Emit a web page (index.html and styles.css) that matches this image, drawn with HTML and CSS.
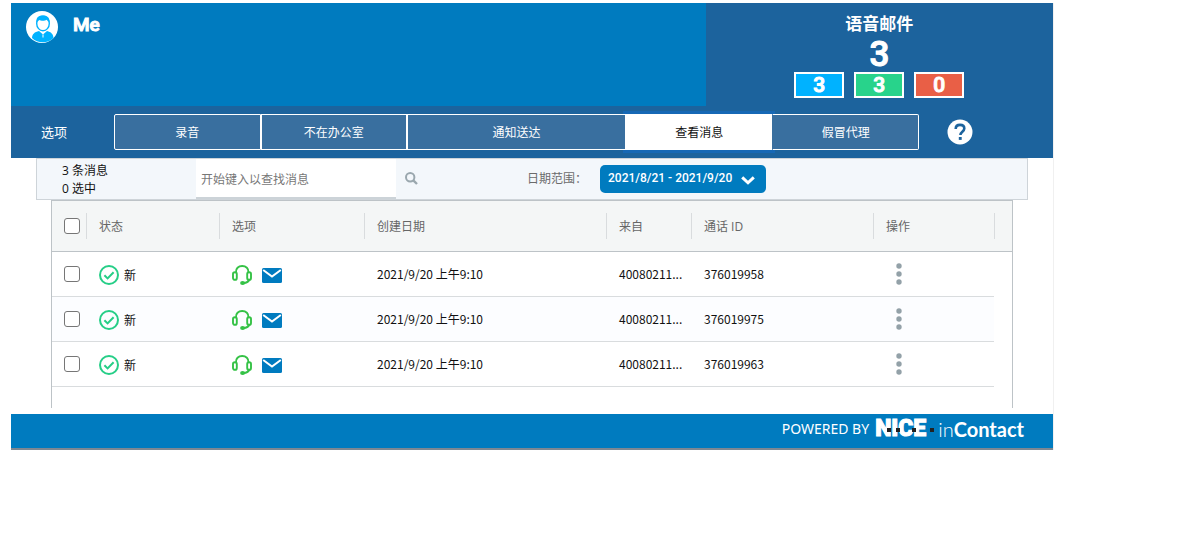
FILE: index.html
```html
<!DOCTYPE html>
<html lang="zh-CN">
<head>
<meta charset="utf-8">
<title>语音邮件</title>
<link rel="stylesheet" href="styles.css">
</head>
<body>
<svg class="defs" aria-hidden="true">
  <symbol id="check" viewBox="0 0 20 20"><circle cx="10" cy="10" r="9" fill="none" stroke="#26ce87" stroke-width="2"/><path d="M5.4 10.2l3.2 3.2 6-6.2" fill="none" stroke="#26ce87" stroke-width="2"/></symbol>
  <symbol id="headset" viewBox="0 0 20 20"><g fill="none" stroke="#35c246" stroke-width="1.900"><path d="M4 7.500C3.500 3.500 6.500 1 10.200 1s6.700 2.500 6.200 6.500"/><rect x="1" y="7.200" width="3.800" height="7.600" rx="1.900"/><rect x="15.200" y="7.200" width="3.800" height="7.600" rx="1.900"/><path d="M17.500 14c-.5 2.600-2.500 3.800-6.500 4.200"/></g><ellipse cx="10.600" cy="18" rx="2.500" ry="1.900" fill="#35c246"/></symbol>
  <symbol id="mail" viewBox="0 0 20 15"><rect width="20" height="15" rx="1.500" fill="#007bbf"/><path d="M1.200 2l8.800 6.600L18.800 2" fill="none" stroke="#fff" stroke-width="2"/></symbol>
  <symbol id="dots" viewBox="0 0 6 22"><g fill="#93a1a8"><circle cx="3" cy="3" r="2.700"/><circle cx="3" cy="11" r="2.700"/><circle cx="3" cy="19" r="2.700"/></g></symbol>
</svg>
<div class="app">
  <header class="header">
    <div class="profile">
      <svg class="avatar" viewBox="0 0 32 32" aria-hidden="true"><circle cx="16" cy="16" r="16" fill="#fff"/><path d="M6 27c.3-4 2.500-6 7-7l4 3.500 4-3.500c4.200 1 6.200 3 6.500 7a15.500 15.500 0 0 1-21.500 0z" fill="#00b2ff"/><path d="M17 23.500v3" stroke="#fff"/><ellipse cx="17" cy="12.500" rx="6.300" ry="7.300" fill="#fff" stroke="#00b2ff" stroke-width="1.400"/><path d="M10.600 11C9.800 6 13 4.500 17 4.500c3.500 0 7 1.500 6.400 6.500-1-.4-2-1.200-2.700-2.300-2.500 1.800-6 1-7.500.3-.6.8-1.200 1.500-2.200 2z" fill="#00b2ff"/></svg>
      <span class="name">Me</span>
    </div>
    <div class="voicemail">
      <div class="vm-title">语音邮件</div>
      <div class="vm-total">3</div>
      <div class="vm-counts">
        <span class="count new">3</span><span class="count read">3</span><span class="count urgent">0</span>
      </div>
    </div>
  </header>
  <nav class="nav">
    <span class="nav-label">选项</span>
    <div class="tabs">
      <button class="tab">录音</button>
      <button class="tab">不在办公室</button>
      <button class="tab wide">通知送达</button>
      <button class="tab active">查看消息</button>
      <button class="tab">假冒代理</button>
    </div>
    <button class="help" aria-label="帮助"><svg viewBox="0 0 26 26" aria-hidden="true"><circle cx="13" cy="13" r="12.500" fill="#fff"/><path d="M8.700 9.900c0-2.500 1.800-4 4.300-4s4.300 1.400 4.300 3.600c0 3-3.900 3.300-3.900 6.400" fill="none" stroke="#1c639d" stroke-width="2.600"/><rect x="11.800" y="18" width="2.900" height="2.900" fill="#1c639d"/></svg></button>
  </nav>
  <main class="content">
    <section class="toolbar">
      <div class="summary"><div>3 条消息</div><div>0 选中</div></div>
      <input class="search" type="text" aria-label="查找消息" placeholder="开始键入以查找消息">
      <svg class="search-icon" viewBox="0 0 13 13" aria-hidden="true"><circle cx="5.200" cy="5.200" r="4.200" fill="none" stroke="#9aa7ae" stroke-width="2"/><path d="M8.300 8.300l3.700 3.700" stroke="#9aa7ae" stroke-width="2.400"/></svg>
      <span class="range-label">日期范围：</span>
      <button class="range">2021/8/21 - 2021/9/20<svg viewBox="0 0 14 9" aria-hidden="true"><path d="M1.200 1.400L7 6.800l5.800-5.400" fill="none" stroke="#fff" stroke-width="3"/></svg></button>
    </section>
    <section class="grid">
      <table>
        <colgroup><col class="c-check"><col class="c-status"><col class="c-options"><col><col class="c-from"><col class="c-id"><col class="c-action"><col class="c-end"></colgroup>
        <thead>
          <tr><th class="pick"><input type="checkbox" aria-label="全选"></th><th><span>状态</span></th><th><span>选项</span></th><th><span>创建日期</span></th><th><span>来自</span></th><th><span>通话 ID</span></th><th><span>操作</span></th><th class="end"><span></span></th></tr>
        </thead>
        <tbody>
          <tr><td class="pick"><input type="checkbox" aria-label="选择 376019958"></td><td><div class="icons status"><svg class="i20"><use href="#check"/></svg>新</div></td><td><div class="icons"><svg class="i20"><use href="#headset"/></svg><svg class="mail"><use href="#mail"/></svg></div></td><td>2021/9/20 上午9:10</td><td>40080211...</td><td>376019958</td><td><button class="more" aria-label="更多"><svg><use href="#dots"/></svg></button></td></tr>
          <tr><td class="pick"><input type="checkbox" aria-label="选择 376019975"></td><td><div class="icons status"><svg class="i20"><use href="#check"/></svg>新</div></td><td><div class="icons"><svg class="i20"><use href="#headset"/></svg><svg class="mail"><use href="#mail"/></svg></div></td><td>2021/9/20 上午9:10</td><td>40080211...</td><td>376019975</td><td><button class="more" aria-label="更多"><svg><use href="#dots"/></svg></button></td></tr>
          <tr><td class="pick"><input type="checkbox" aria-label="选择 376019963"></td><td><div class="icons status"><svg class="i20"><use href="#check"/></svg>新</div></td><td><div class="icons"><svg class="i20"><use href="#headset"/></svg><svg class="mail"><use href="#mail"/></svg></div></td><td>2021/9/20 上午9:10</td><td>40080211...</td><td>376019963</td><td><button class="more" aria-label="更多"><svg><use href="#dots"/></svg></button></td></tr>
        </tbody>
      </table>
    </section>
  </main>
  <footer class="footer">
    <span class="powered">POWERED BY</span>
    <span class="nice">NICE<svg class="squares" viewBox="0 0 62 4" aria-hidden="true"><g fill="#222"><path d="M12 0h4v4h-4zM21 0h4v4h-4zM37 0h4v4h-4zM55 0h4v4h-4z"/></g></svg></span>
    <span class="brand">in<b>Contact</b></span>
  </footer>
</div>
</body>
</html>
```
FILE: styles.css
```css
* { box-sizing: border-box; }
body {
  margin: 0;
  padding: 3px 142px 0 11px;
  background: #fff;
  color: #111;
  font: 12px/18px "Open Sans", "Noto Sans CJK SC", sans-serif;
}
button { font: inherit; margin: 0; padding: 0; border: 0; background: none; }
svg { display: block; }
.defs { position: absolute; width: 0; height: 0; }
.app { border-right: 1px solid #f0f0f0; }

.header { display: grid; grid-template-columns: 2fr 1fr; color: #fff; background: #1c639d; }
.profile { display: flex; gap: 15px; padding: 8px 15px; background: #007bbf; }
.avatar { width: 32px; height: 32px; }
.name { font: 500 19px/28px Roboto, sans-serif; -webkit-text-stroke: 1px #fff; }
.voicemail { display: flex; flex-direction: column; align-items: center; padding: 8px 0; }
.vm-title { font: bold 17px/24px "Noto Sans CJK SC", sans-serif; }
.vm-total { height: 37px; padding-top: 1px; font: 500 35px/37px Roboto, sans-serif; -webkit-text-stroke: 1px #fff; }
.vm-counts { display: flex; gap: 10px; }
.count { width: 50px; height: 26px; border: 2px solid #fff; text-align: center; font: 500 21px/23px Roboto, sans-serif; -webkit-text-stroke: 1px #fff; }
.new { background: #00b2ff; }
.read { background: #28d38b; }
.urgent { background: #e95f46; }

.nav { display: flex; align-items: center; padding: 8px 80px 8px 30px; background: #1c639d; color: #fff; }
.nav-label { width: 73px; font-size: 13px; }
.tabs { display: flex; flex: 1; height: 36px; }
.tab { flex: 2 1 0; padding-top: 2px; border: 1px solid #fff; background: #396f9f; color: #fff; }
.tab:first-child { border-radius: 2px 0 0 2px; }
.tab:last-child { border-radius: 0 2px 2px 0; }
.tab.wide { flex-grow: 3; }
.tab.active { background: #fff; color: #111; box-shadow: 0 0 0 3px #1668b5; }
.tab.wide, .tab.active + .tab { position: relative; }
.tab.wide { z-index: 1; }
.tab.active + .tab { border-left-color: #396f9f; }
.help { margin-left: 28px; }
.help svg { width: 26px; height: 26px; }

.content { padding: 0 25px 6px; }
.toolbar { display: flex; align-items: center; height: 42px; border: 1px solid #ced4d9; background: #f3f7fb; }
.summary { width: 159px; padding: 2px 0 0 25px; }
.search { width: 200px; height: 40px; padding: 2px 5px 0; border: 0; border-bottom: 2px solid #ccd3d8; background: #fff; font: inherit; }
.search::placeholder { color: #777; opacity: 1; }
.search-icon { width: 13px; height: 13px; margin: -2px 0 0 9px; }
.range-label { width: 73px; margin-left: 109px; color: #6b6b6b; white-space: nowrap; }
.range { display: flex; align-items: center; justify-content: space-between; width: 166px; height: 28px; padding: 0 11px 2px 8px; border-radius: 5px; background: #007bbf; color: #fff; font: 500 12px Roboto, sans-serif; white-space: nowrap; }
.range svg { width: 14px; height: 9px; margin-top: 4px; }

.grid { margin: 0 15px; min-height: 208px; border: 1px solid #bdc3c7; border-bottom: 0; }
table { width: 100%; table-layout: fixed; border-collapse: separate; border-spacing: 0; }
.c-check { width: 34px; }
.c-status { width: 133px; }
.c-options { width: 145px; }
.c-from { width: 85px; }
.c-id { width: 182px; }
.c-action { width: 121px; }
.c-end { width: 18px; }
th { height: 51px; padding: 0; border-bottom: 1px solid #bdc3c7; background: #f4f6f6; color: #666; font-weight: normal; text-align: left; }
th span { display: block; height: 26px; padding-left: 12px; border-left: 1px solid #d9dcde; line-height: 28px; }
td { height: 45px; padding: 0 0 0 13px; border-bottom: 1px solid #d9dcde; font-family: "Noto Sans CJK SC", sans-serif; white-space: nowrap; }
tbody tr:nth-child(even) td { background: #fcfdff; }
th.pick, td.pick { padding: 0 0 0 12px; }
.pick input { appearance: none; display: block; width: 16px; height: 16px; margin: 0; border: 1px solid #767676; border-radius: 3px; background: #fff; }
.icons { display: flex; align-items: center; gap: 10px; padding-top: 2px; }
.status { gap: 5px; }
.i20 { width: 20px; height: 20px; }
.mail { width: 20px; height: 15px; }
.more { display: flex; justify-content: center; width: 26px; }
.more svg { width: 6px; height: 22px; }

.footer { display: flex; align-items: center; justify-content: flex-end; height: 36px; padding: 0 29px 5px; border-bottom: 2px solid #7d8792; background: #007bbf; color: #fff; }
.powered { font: 14px/30px "Noto Sans", sans-serif; }
.nice { position: relative; margin-left: 6px; font: 900 23px/30px Roboto, sans-serif; -webkit-text-stroke: 1px #fff; }
.squares { position: absolute; left: 0; top: 14px; width: 62px; height: 4px; }
.brand { margin-left: 12px; font: 300 20px/30px Lato, sans-serif; }
.brand b { font-weight: 700; }
```
